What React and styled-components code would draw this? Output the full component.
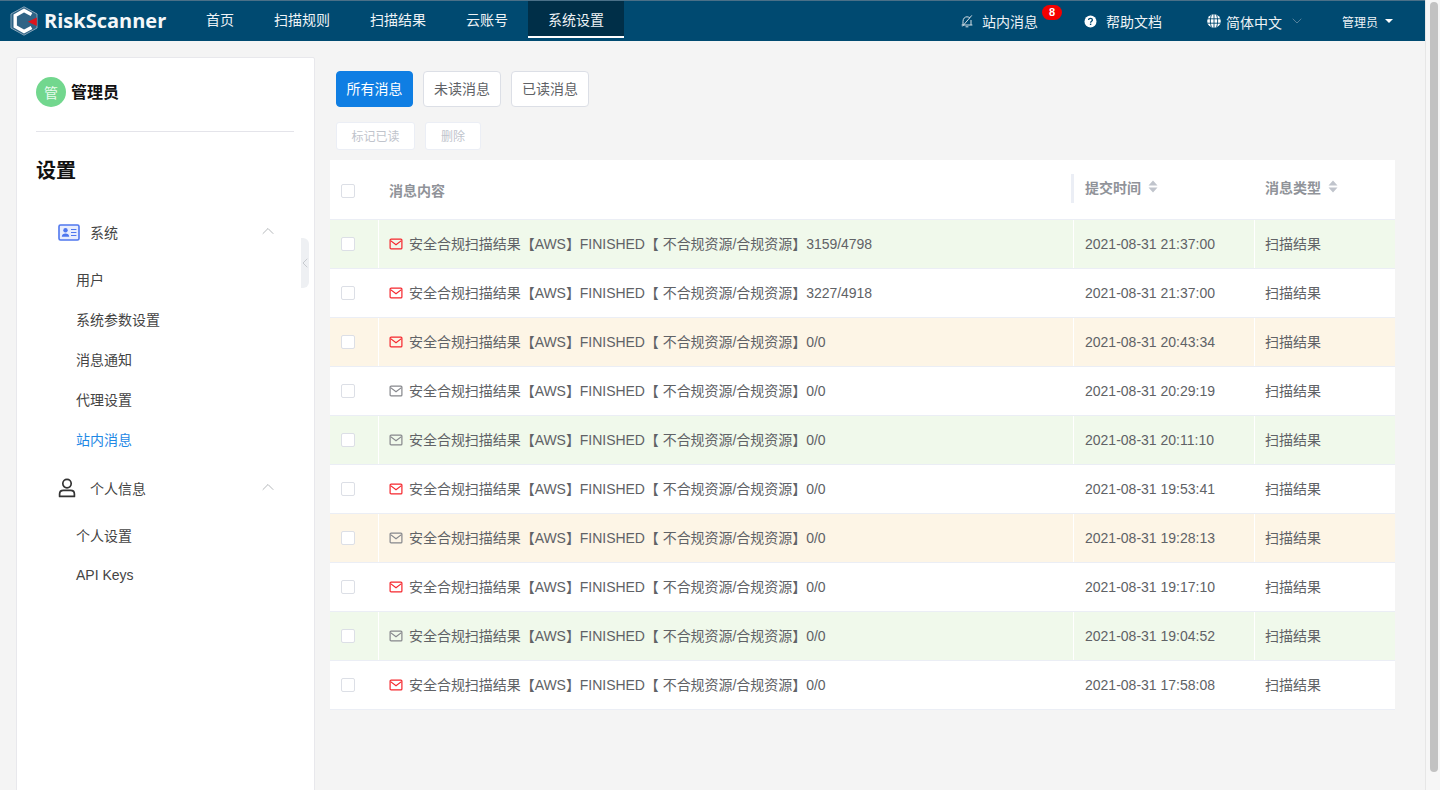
import React from 'react'
import styled, { createGlobalStyle } from 'styled-components'
import { ChevronUp, ChevronDown, ChevronLeft } from 'lucide-react'

const navItems = ['首页', '扫描规则', '扫描结果', '云账号', '系统设置']
const systemItems = ['用户', '系统参数设置', '消息通知', '代理设置', '站内消息']
const personalItems = ['个人设置', 'API Keys']

const rows = [
  { tone: 'green', unread: true, count: '3159/4798', time: '2021-08-31 21:37:00' },
  { tone: 'white', unread: true, count: '3227/4918', time: '2021-08-31 21:37:00' },
  { tone: 'orange', unread: true, count: '0/0', time: '2021-08-31 20:43:34' },
  { tone: 'white', unread: false, count: '0/0', time: '2021-08-31 20:29:19' },
  { tone: 'green', unread: false, count: '0/0', time: '2021-08-31 20:11:10' },
  { tone: 'white', unread: true, count: '0/0', time: '2021-08-31 19:53:41' },
  { tone: 'orange', unread: false, count: '0/0', time: '2021-08-31 19:28:13' },
  { tone: 'white', unread: true, count: '0/0', time: '2021-08-31 19:17:10' },
  { tone: 'green', unread: false, count: '0/0', time: '2021-08-31 19:04:52' },
  { tone: 'white', unread: true, count: '0/0', time: '2021-08-31 17:58:08' },
]

const toneColors = { green: '#f0f9eb', orange: '#fdf5e6', white: '#fff' }

const Logo = () => (
  <LogoWrap>
    <svg width="28" height="30" viewBox="0 0 28 30">
      <path d="M14 0.8 L27 8 V22 L14 29.2 L1 22 V8 Z" fill="#2f6486" stroke="#86a4b9" strokeWidth="1" />
      <path d="M21.5 8.6 L14 4.4 L5.2 9.4 V20.6 L14 25.6 L21.5 21.4" fill="none" stroke="#fff" strokeWidth="3.4" />
      <path d="M26.8 11.6 V20 L17.8 15.8 Z" fill="#dc141c" />
    </svg>
    <LogoText>RiskScanner</LogoText>
  </LogoWrap>
)

const BellIcon = () => (
  <svg width="14" height="14" viewBox="0 0 14 14">
    <path d="M1.6 11 H12.4 M3 11 V7.4 C3 4.6 4.8 2.8 7 2.8 C8.2 2.8 9.3 3.3 10 4.2 M11 6 V11 M5.6 12.8 H8.4 M2.4 12.4 L11.8 1.4" fill="none" stroke="#d5dfe6" strokeWidth="1" />
  </svg>
)

const HelpIcon = () => (
  <svg width="13" height="13" viewBox="0 0 13 13">
    <circle cx="6.5" cy="6.5" r="6" fill="#fff" />
    <path d="M4.6 5.1 C4.6 3.9 5.5 3.3 6.5 3.3 C7.6 3.3 8.4 4 8.4 4.9 C8.4 6.2 6.6 6.2 6.6 7.7" fill="none" stroke="#004a71" strokeWidth="1.3" />
    <rect x="5.9" y="8.6" width="1.4" height="1.4" fill="#004a71" />
  </svg>
)

const GlobeIcon = () => (
  <svg width="14" height="14" viewBox="0 0 14 14">
    <circle cx="7" cy="7" r="6.8" fill="#fff" />
    <path d="M0.4 4.8 H13.6 M0.4 9.2 H13.6 M7 0 V14 M4.4 0.8 C3 4.5 3 9.5 4.4 13.2 M9.6 0.8 C11 4.5 11 9.5 9.6 13.2" fill="none" stroke="#004a71" strokeWidth="0.9" />
  </svg>
)

const CardIcon = () => (
  <svg width="22" height="17" viewBox="0 0 22 17">
    <rect x="1" y="1" width="20" height="15" rx="1.5" fill="#e8edfd" stroke="#4f77ee" strokeWidth="1.6" />
    <circle cx="7.5" cy="6.2" r="2.2" fill="#4f77ee" />
    <path d="M3.8 12.8 C3.8 10.2 5.5 9.4 7.5 9.4 C9.5 9.4 11.2 10.2 11.2 12.8 Z" fill="#4f77ee" />
    <path d="M13 5.5 H18.4 M13 8.5 H18.4 M13 11.5 H18.4" stroke="#4f77ee" strokeWidth="1.2" />
  </svg>
)

const PersonIcon = () => (
  <svg width="18" height="20" viewBox="0 0 18 20">
    <circle cx="9" cy="5.6" r="4.2" fill="none" stroke="#333" strokeWidth="1.7" />
    <path d="M1.6 18.4 V16 C1.6 13.6 3.4 12.4 5.4 12.4 H12.6 C14.6 12.4 16.4 13.6 16.4 16 V18.4 Z" fill="none" stroke="#333" strokeWidth="1.7" strokeLinejoin="round" />
  </svg>
)

const MailIcon = ({ color }) => (
  <svg width="14" height="12" viewBox="0 0 14 12">
    <rect x="1.1" y="1.1" width="11.8" height="9.8" rx="1" fill="none" stroke={color} strokeWidth="1.2" />
    <path d="M1.6 2.6 L7 6.8 L12.4 2.6" fill="none" stroke={color} strokeWidth="1.2" />
  </svg>
)

const SortIcon = () => (
  <SortWrap>
    <svg width="10" height="13" viewBox="0 0 10 13">
      <path d="M5 0.5 L9.5 5.5 H0.5 Z M5 12.5 L0.5 7.5 H9.5 Z" fill="#c0c4cc" />
    </svg>
  </SortWrap>
)

const App = () => {
  return (
    <Frame>
      <GlobalStyle />
      <Page>
        <Header>
          <Logo />
          <Nav>
            {navItems.map((item, i) => (
              <NavItem key={item} $active={i === 4}>{item}</NavItem>
            ))}
          </Nav>
          <HeaderRight>
            <MessageLink>
              <BellIcon />
              <span>站内消息</span>
              <Badge>8</Badge>
            </MessageLink>
            <HelpLink>
              <HelpIcon />
              <span>帮助文档</span>
            </HelpLink>
            <LangLink>
              <GlobeIcon />
              <span>简体中文</span>
              <ChevronDown size={16} strokeWidth={1} color="#7f9db2" />
            </LangLink>
            <UserLink>
              <span>管理员</span>
              <Caret />
            </UserLink>
          </HeaderRight>
        </Header>
        <Body>
          <Sidebar>
            <UserRow>
              <Avatar>管</Avatar>
              <UserName>管理员</UserName>
            </UserRow>
            <Divider />
            <SideTitle>设置</SideTitle>
            <MenuGroup>
              <MenuHead>
                <MenuIcon><CardIcon /></MenuIcon>
                <MenuLabel>系统</MenuLabel>
                <MenuArrow><ChevronUp size={20} strokeWidth={1} color="#a6a9ad" /></MenuArrow>
              </MenuHead>
              {systemItems.map((item, i) => (
                <MenuItem key={item} $active={i === 4}>{item}</MenuItem>
              ))}
            </MenuGroup>
            <MenuGroup>
              <MenuHead>
                <MenuIcon><PersonIcon /></MenuIcon>
                <MenuLabel>个人信息</MenuLabel>
                <MenuArrow><ChevronUp size={20} strokeWidth={1} color="#a6a9ad" /></MenuArrow>
              </MenuHead>
              {personalItems.map((item) => (
                <MenuItem key={item}>{item}</MenuItem>
              ))}
            </MenuGroup>
            <Collapse>
              <ChevronLeft size={16} strokeWidth={1} color="#b4b7bd" />
            </Collapse>
          </Sidebar>
          <Content>
            <Tabs>
              <TabButton $active>所有消息</TabButton>
              <TabButton>未读消息</TabButton>
              <TabButton>已读消息</TabButton>
            </Tabs>
            <Actions>
              <ActionButton>标记已读</ActionButton>
              <ActionButton>删除</ActionButton>
            </Actions>
            <Table>
              <HeadRow>
                <HeadCheckCell><Check /></HeadCheckCell>
                <HeadMain>消息内容</HeadMain>
                <HeadCell $resize>提交时间<SortIcon /></HeadCell>
                <HeadCell>消息类型<SortIcon /></HeadCell>
              </HeadRow>
              {rows.map((row) => (
                <Row key={row.time + row.count} $tone={row.tone}>
                  <CheckCell><Check /></CheckCell>
                  <MessageCell>
                    <MailIcon color={row.unread ? '#f5262d' : '#85878c'} />
                    <span>安全合规扫描结果【AWS】FINISHED【 不合规资源/合规资源】{row.count}</span>
                  </MessageCell>
                  <TimeCell>{row.time}</TimeCell>
                  <TypeCell>扫描结果</TypeCell>
                </Row>
              ))}
            </Table>
          </Content>
        </Body>
      </Page>
      <ScrollTrack>
        <ScrollThumb />
      </ScrollTrack>
    </Frame>
  )
}

const GlobalStyle = createGlobalStyle`
  html, body {
    margin: 0;
    height: 100%;
    overflow: hidden;
  }
  * {
    box-sizing: border-box;
  }
  body {
    font-family: "Liberation Sans", "Noto Sans CJK SC", sans-serif;
    font-size: 14px;
    color: #606266;
  }
`

const Frame = styled.div`
  display: flex;
  width: 1440px;
  height: 790px;
  overflow: hidden;
`

const Page = styled.div`
  flex: 1;
  min-width: 0;
  display: flex;
  flex-direction: column;
  background: #f4f4f4;
`

const ScrollTrack = styled.div`
  width: 15px;
  padding: 2px 2px 18px 4px;
  background: #f6f6f6;
  border-left: 1px solid #e6e6e6;
`

const ScrollThumb = styled.div`
  width: 100%;
  height: 100%;
  border-radius: 5px;
  background: #c2c2c2;
`

const Header = styled.header`
  height: 41px;
  flex-shrink: 0;
  display: flex;
  align-items: stretch;
  background: #004a71;
  border-top: 1px solid #4a7088;
  padding-left: 10px;
  color: #fff;
`

const LogoWrap = styled.div`
  width: 176px;
  display: flex;
  align-items: center;
  gap: 6px;
`

const LogoText = styled.span`
  font-family: "Open Sans", sans-serif;
  font-size: 20px;
  font-weight: 700;
  color: #f4f7f9;
  margin-top: -2px;
`

const Nav = styled.nav`
  display: flex;
`

const NavItem = styled.div`
  height: 37px;
  padding: 0 20px;
  display: flex;
  align-items: center;
  color: #eef3f6;
  background: ${(p) => (p.$active ? '#002f48' : 'transparent')};
  border-bottom: 2px solid ${(p) => (p.$active ? '#fff' : 'transparent')};
`

const HeaderRight = styled.div`
  margin-left: auto;
  display: flex;
  align-items: center;
  color: #eef3f6;
  padding-right: 32px;
`

const MessageLink = styled.div`
  position: relative;
  display: flex;
  align-items: center;
  gap: 8px;
  margin-right: 46px;
`

const Badge = styled.span`
  position: absolute;
  top: -6px;
  right: -24px;
  width: 20px;
  height: 15px;
  border-radius: 8px;
  background: #f40000;
  color: #fff;
  font-size: 11px;
  font-weight: 700;
  line-height: 15px;
  text-align: center;
`

const HelpLink = styled.div`
  display: flex;
  align-items: center;
  gap: 9px;
  margin-right: 45px;
`

const LangLink = styled.div`
  display: flex;
  align-items: center;
  gap: 5px;
  margin-right: 37px;

  span {
    margin-right: 2px;
    padding-top: 2px;
  }
`

const UserLink = styled.div`
  display: flex;
  align-items: center;
  gap: 7px;
  font-size: 12px;
`

const Caret = styled.i`
  width: 0;
  height: 0;
  border-left: 4px solid transparent;
  border-right: 4px solid transparent;
  border-top: 4px solid #fff;
`

const Body = styled.div`
  flex: 1;
  display: flex;
  min-height: 0;
  padding: 16px 30px 0 16px;
`

const Sidebar = styled.aside`
  position: relative;
  width: 299px;
  height: 800px;
  flex-shrink: 0;
  padding: 19px 20px 0 19px;
  background: #fff;
  border: 1px solid #e8e8ec;
  border-radius: 2px;
`

const UserRow = styled.div`
  display: flex;
  align-items: center;
  gap: 5px;
  height: 30px;
`

const Avatar = styled.div`
  width: 30px;
  height: 30px;
  border-radius: 50%;
  background: #72d78e;
  color: #e9fbee;
  display: flex;
  align-items: center;
  justify-content: center;
  font-size: 14px;
`

const UserName = styled.span`
  padding-bottom: 2px;
  font-size: 16px;
  font-weight: 700;
  color: #111;
`

const Divider = styled.div`
  height: 1px;
  margin-top: 24px;
  background: #e4e4ea;
`

const SideTitle = styled.h2`
  margin: 25px 0 27px;
  font-size: 20px;
  line-height: 28px;
  font-weight: 700;
  color: #111;
`

const MenuGroup = styled.div`
  margin-bottom: 9px;
`

const MenuHead = styled.div`
  display: flex;
  align-items: center;
  height: 40px;
  margin-bottom: 7px;
  padding: 0 16px 0 20px;
  color: #444;
`

const MenuIcon = styled.span`
  width: 34px;
  display: flex;
  padding-left: 2px;
`

const MenuLabel = styled.span`
  flex: 1;
`

const MenuArrow = styled.span`
  display: flex;
  margin-bottom: 3px;
`

const MenuItem = styled.div`
  height: 40px;
  padding-left: 40px;
  display: flex;
  align-items: center;
  color: ${(p) => (p.$active ? '#1e88e5' : '#444')};
`

const Collapse = styled.div`
  position: absolute;
  top: 180px;
  right: 5px;
  width: 8px;
  height: 50px;
  display: flex;
  align-items: center;
  justify-content: center;
  background: #eef0f3;
  border-radius: 0 6px 6px 0;

  svg {
    flex-shrink: 0;
  }
`

const Content = styled.main`
  flex: 1;
  min-width: 0;
  padding-left: 15px;
`

const Tabs = styled.div`
  display: flex;
  gap: 10px;
  padding: 14px 0 0 6px;
`

const TabButton = styled.button`
  width: ${(p) => (p.$active ? '77px' : '78px')};
  height: 36px;
  padding: 0 0 2px;
  font: inherit;
  border-radius: 4px;
  border: 1px solid ${(p) => (p.$active ? '#0f7ee3' : '#dcdfe6')};
  background: ${(p) => (p.$active ? '#0f7ee3' : '#fff')};
  color: ${(p) => (p.$active ? '#fff' : '#606266')};
`

const Actions = styled.div`
  display: flex;
  gap: 10px;
  padding: 15px 0 0 6px;
`

const ActionButton = styled.button`
  min-width: 56px;
  height: 28px;
  padding: 0 14.5px 2px;
  font: inherit;
  font-size: 12px;
  border-radius: 3px;
  border: 1px solid #ebeef5;
  background: #fff;
  color: #c0c4cc;
`

const Table = styled.div`
  margin-top: 10px;
  background: #fff;
`

const columns = 'grid-template-columns: 48px 1fr 181px 141px;'

const HeadRow = styled.div`
  display: grid;
  ${columns}
  height: 60px;
  align-items: center;
  color: #909399;
  font-weight: 700;
  border-bottom: 1px solid #ebeef5;
`

const HeadMain = styled.div`
  padding-left: 11px;
`

const HeadCell = styled.div`
  position: relative;
  display: flex;
  align-items: center;
  gap: 7px;
  padding: 0 0 6px ${(p) => (p.$resize ? '12px' : '11px')};

  ${(p) => p.$resize && `
    &::before {
      content: '';
      position: absolute;
      left: -2px;
      top: -3px;
      width: 3px;
      height: 29px;
      background: #ebeef5;
    }
  `}
`

const SortWrap = styled.span`
  display: flex;
`

const Row = styled.div`
  display: grid;
  ${columns}
  height: 49px;
  align-items: stretch;
  background: ${(p) => toneColors[p.$tone]};
  border-bottom: 1px solid #ebeef5;
`

const CheckCell = styled.div`
  display: flex;
  align-items: center;
  padding-left: 11px;
`

const HeadCheckCell = styled(CheckCell)`
  padding-top: 2px;
`

const Check = styled.span`
  width: 14px;
  height: 14px;
  background: #fff;
  border: 1px solid #dcdfe6;
  border-radius: 2px;
`

const Cell = styled.div`
  display: flex;
  align-items: center;
  border-left: 1px solid #fff;
`

const MessageCell = styled(Cell)`
  gap: 6px;
  padding: 0 0 0 10px;
  white-space: nowrap;

  span {
    padding-bottom: 2px;
    letter-spacing: -0.04px;
  }
`

const TimeCell = styled(Cell)`
  padding-left: 11px;
`

const TypeCell = styled(Cell)`
  padding: 0 0 2px 10px;
`

export default App
